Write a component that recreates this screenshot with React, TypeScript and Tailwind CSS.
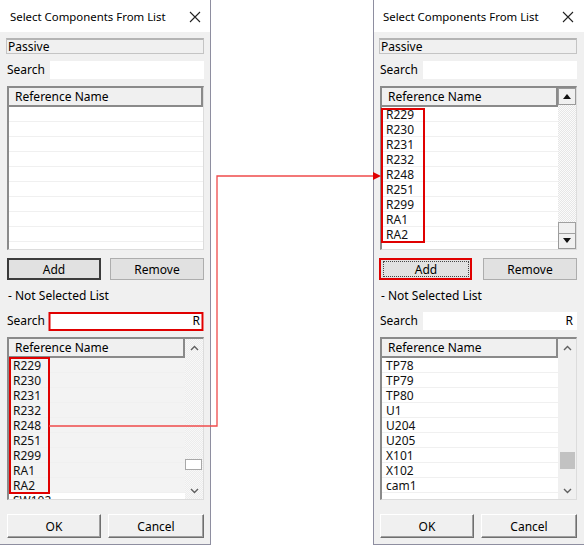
import React from "react";

const font = { fontFamily: '"Noto Sans", "Open Sans", sans-serif' };

type ScrollKind = "none" | "classic" | "modern";

function Chevron({ up }: { up?: boolean }) {
  return (
    <svg width="9" height="6" viewBox="0 0 9 6" className="text-[#606060]">
      <path
        d={up ? "M1 5 L4.5 1.5 L8 5" : "M1 1 L4.5 4.5 L8 1"}
        fill="none"
        stroke="currentColor"
        strokeWidth="1.4"
      />
    </svg>
  );
}

function Triangle({ up }: { up?: boolean }) {
  return (
    <svg width="8" height="5" viewBox="0 0 8 5">
      <path d={up ? "M0 5 L4 0 L8 5 Z" : "M0 0 L8 0 L4 5 Z"} fill="#111" />
    </svg>
  );
}

function ListBox({
  rows,
  height,
  scroll,
  thumbTop = 0,
  thumbH = 10,
  thumbGray,
  rowBg = "bg-white",
  lastRowBg = "bg-white",
}: {
  rows: string[];
  height: string;
  scroll: ScrollKind;
  thumbTop?: number;
  thumbH?: number;
  thumbGray?: boolean;
  rowBg?: string;
  lastRowBg?: string;
}) {
  const shown = [...rows];
  while (shown.length < 11) shown.push("");
  return (
    <div
      className={`ml-[1px] ${height} flex border-l-2 border-t-2 border-[#8a8a8a] border-r border-b border-r-[#dcdcdc] border-b-[#dcdcdc] bg-white overflow-hidden`}
    >
      <div className="flex-1 flex flex-col overflow-hidden">
        <div className="h-[19px] shrink-0 bg-[#f0f0f0] border-r-2 border-b-2 border-[#8a8a8a] pl-[6px] flex items-center text-[12px] text-black leading-none">
          Reference Name
        </div>
        {shown.map((r, i) => (
          <div
            key={i}
            className={`h-[15px] shrink-0 pl-[4px] pt-[2px] flex items-center text-[12px] leading-[12px] text-[#111] border-b border-[#f0f0f0] ${
              i < rows.length - 1 || (i < rows.length && rows.length < 10) ? rowBg : lastRowBg
            }`}
          >
            {r}
          </div>
        ))}
      </div>
      {scroll === "classic" && (
        <div className="w-[18px] shrink-0 flex flex-col bg-[repeating-conic-gradient(#e6e6e6_0%_25%,#fbfbfb_0%_50%)] bg-[length:2px_2px]">
          <div className="h-[17px] shrink-0 bg-[#f0f0f0] border border-[#9a9a9a] flex items-center justify-center">
            <Triangle up />
          </div>
          <div className="flex-1 relative">
            <div
              className="absolute left-0 right-0 bg-[#f0f0f0] border border-[#a0a0a0]"
              style={{ top: thumbTop, height: thumbH }}
            />
          </div>
          <div className="h-[17px] shrink-0 bg-[#f0f0f0] border border-[#9a9a9a] flex items-center justify-center">
            <Triangle />
          </div>
        </div>
      )}
      {scroll === "modern" && (
        <div
          className={`w-[18px] shrink-0 flex flex-col ${
            thumbGray ? "bg-[#f0f0f0]" : "bg-[repeating-conic-gradient(#ececec_0%_25%,#f8f8f8_0%_50%)] bg-[length:2px_2px]"
          }`}
        >
          <div className="h-[17px] shrink-0 flex items-center justify-center">
            <Chevron up />
          </div>
          <div className="flex-1 relative">
            <div
              className={`absolute ${
                thumbGray ? "left-[2px] right-[1px] bg-[#c2c2c2]" : "left-0 right-[1px] bg-white border border-[#a8a8a8]"
              }`}
              style={{ top: thumbTop, height: thumbH }}
            />
          </div>
          <div className="h-[17px] shrink-0 flex items-center justify-center">
            <Chevron />
          </div>
        </div>
      )}
    </div>
  );
}

function Btn({
  label,
  w = "w-[94px]",
  strong,
  focus,
  classic,
}: {
  label: string;
  w?: string;
  strong?: boolean;
  focus?: boolean;
  classic?: boolean;
}) {
  const border = classic
    ? "border border-t-white border-l-white border-r-[#6f6f6f] border-b-[#6f6f6f] bg-[#f0f0f0] shadow-[inset_-1px_-1px_0_#a0a0a0]"
    : strong
    ? "border-2 border-[#3c3c3c] bg-[#e1e1e1]"
    : "border border-[#adadad] bg-[#e1e1e1]";
  return (
    <div className={`${w} h-full ${border} flex items-center justify-center p-[2px]`}>
      <div
        className={`w-full h-full flex items-center justify-center pt-[1px] text-[12px] text-black leading-none ${
          focus ? "border border-dotted border-[#444]" : ""
        }`}
      >
        {label}
      </div>
    </div>
  );
}

function SearchRow({ value, h = "h-[18px]", mt }: { value?: string; h?: string; mt: string }) {
  return (
    <div className={`${mt} ${h} flex items-center`}>
      <div className="w-[44px] pl-[1px] text-[12px] text-black leading-none">Search</div>
      <div className="flex-1 h-full bg-white flex items-center justify-end pr-[4px] text-[12px] text-black leading-none">
        {value}
      </div>
    </div>
  );
}

function Dialog({
  side,
  topRows,
  topScroll,
  bottomRows,
  bottomThumbTop,
  bottomThumbH,
  bottomThumbGray,
  bottomRowBg,
  addFocus,
}: {
  side: "left" | "right";
  topRows: string[];
  topScroll: ScrollKind;
  bottomRows: string[];
  bottomThumbTop: number;
  bottomThumbH: number;
  bottomThumbGray?: boolean;
  bottomRowBg?: string;
  addFocus?: boolean;
}) {
  const frame =
    side === "left"
      ? "w-[211px] border-r border-[#8e8ea0] pl-[6px] pr-[6px]"
      : "w-[211px] border-l border-[#8e8ea0] pl-[5px] pr-[7px]";
  return (
    <div className={`${frame} h-[545px] border-b bg-[#f0f0f0] flex flex-col shrink-0`}>
      {/* title bar */}
      <div
        className={`h-[32px] shrink-0 bg-white flex items-center justify-between pt-[2px] ${
          side === "left" ? "-ml-[6px] -mr-[6px] pl-[10px] pr-[9px]" : "-ml-[5px] -mr-[7px] pl-[9px] pr-[10px]"
        }`}
      >
        <span className="text-[11.4px] text-black leading-none">Select Components From List</span>
        <svg width="12" height="12" viewBox="0 0 12 12">
          <path d="M1 1 L11 11 M11 1 L1 11" stroke="#222" strokeWidth="1.1" />
        </svg>
      </div>

      {/* selected list */}
      <div className="mt-[6px] h-[16px] shrink-0 bg-[#f0f0f0] border border-[#c4c4c4] border-t-2 border-t-[#b4b4b4] pl-[1px] flex items-center text-[12px] text-black leading-none">
        Passive
      </div>
      <SearchRow mt="mt-[7px]" />
      <div className="mt-[7px] shrink-0">
        <ListBox
          rows={topRows}
          height="h-[164px]"
          scroll={topScroll}
          thumbTop={117}
          thumbH={12}
        />
      </div>
      <div className="mt-[8px] h-[22px] shrink-0 ml-[1px] flex justify-between">
        <Btn label="Add" strong={!addFocus} focus={addFocus} w={addFocus ? "w-[92px]" : "w-[94px]"} />
        <Btn label="Remove" />
      </div>

      {/* not selected list */}
      <div className="mt-[8px] h-[16px] shrink-0 pl-[2px] flex items-center text-[12px] text-black leading-none">
        - Not Selected List
      </div>
      <SearchRow mt="mt-[8px]" value="R" />
      <div className="mt-[7px] shrink-0">
        <ListBox
          rows={bottomRows}
          height="h-[163px]"
          scroll="modern"
          thumbTop={bottomThumbTop}
          thumbH={bottomThumbH}
          thumbGray={bottomThumbGray}
          rowBg={bottomRowBg}
        />
      </div>
      <div className="mt-[14px] h-[24px] shrink-0 ml-[1px] flex justify-between">
        <Btn label="OK" classic />
        <Btn label="Cancel" classic w="w-[96px]" />
      </div>
    </div>
  );
}

export default function App() {
  const picked = ["R229", "R230", "R231", "R232", "R248", "R251", "R299", "RA1", "RA2"];
  const rest = ["TP78", "TP79", "TP80", "U1", "U204", "U205", "X101", "X102", "cam1"];

  return (
    <div className="relative w-[584px] h-[546px] bg-white flex overflow-hidden" style={font}>
      <Dialog
        side="left"
        topRows={[]}
        topScroll="none"
        bottomRows={[...picked, "SW102"]}
        bottomThumbTop={103}
        bottomThumbH={11}
        bottomRowBg="bg-[#f3f3f3]"
      />
      <div className="flex-1" />
      <Dialog
        side="right"
        topRows={picked}
        topScroll="classic"
        bottomRows={rest}
        bottomThumbTop={96}
        bottomThumbH={17}
        bottomThumbGray
        addFocus
      />

      {/* red annotations */}
      <svg className="absolute inset-0 pointer-events-none" width="584" height="546" viewBox="0 0 584 546">
        <g fill="none" stroke="#e00000" strokeWidth="2">
          <rect x="10" y="358" width="39" height="135" />
          <rect x="49.5" y="313" width="153" height="17" />
          <rect x="382" y="109" width="42" height="133" />
          <rect x="380" y="259" width="91" height="20" />
        </g>
        <path d="M49 426 H217 V176 H374" fill="none" stroke="#ef4b4b" strokeWidth="1.3" />
        <path d="M373 172 L381 176 L373 180 Z" fill="#e00000" />
      </svg>
    </div>
  );
}
